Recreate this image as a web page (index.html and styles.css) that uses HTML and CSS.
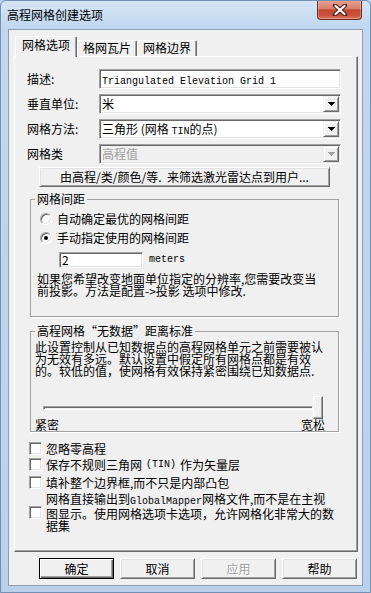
FILE: index.html
```html
<!DOCTYPE html>
<html lang="zh-CN">
<head>
    <meta charset="UTF-8">
    <title>高程网格创建选项</title>
    <link rel="stylesheet" href="styles.css">
</head>
<body>

    <div class="window">
        <div class="titlebar">
            <span class="title">高程网格创建选项</span>
            <div class="close-btn">
                <svg width="16" height="12" viewBox="0 0 16 12">
                    <path d="M3 1.5 L13 10.5 M13 1.5 L3 10.5" stroke="#4a2018" stroke-width="4.2" stroke-linecap="round"/>
                    <path d="M3.5 2 L12.5 10 M12.5 2 L3.5 10" stroke="#fff" stroke-width="2.2" stroke-linecap="round"/>
                </svg>
            </div>
        </div>

        <div class="client">
            <div class="tabs">
                <div class="tab active">网格选项</div>
                <div class="tab">格网瓦片</div>
                <div class="tab">网格边界</div>
            </div>

            <div class="panel">
                <div class="form-row">
                    <span class="label">描述:</span>
                    <div class="edit wide"><span class="mono">Triangulated Elevation Grid 1</span></div>
                </div>
                <div class="form-row">
                    <span class="label">垂直单位:</span>
                    <div class="combo">
                        <span class="combo-text">米</span>
                        <span class="drop"><svg width="7" height="4"><path d="M0 0h7v1H0zM1 1h5v1H1zM2 2h3v1H2zM3 3h1v1H3z"/></svg></span>
                    </div>
                </div>
                <div class="form-row">
                    <span class="label">网格方法:</span>
                    <div class="combo">
                        <span class="combo-text">三角形 (网格 <span class="mono">TIN</span>的点)</span>
                        <span class="drop"><svg width="7" height="4"><path d="M0 0h7v1H0zM1 1h5v1H1zM2 2h3v1H2zM3 3h1v1H3z"/></svg></span>
                    </div>
                </div>
                <div class="form-row">
                    <span class="label">网格类</span>
                    <div class="combo disabled">
                        <span class="combo-text">高程值</span>
                        <span class="drop"><svg width="7" height="4"><path d="M0 0h7v1H0zM1 1h5v1H1zM2 2h3v1H2zM3 3h1v1H3z"/></svg></span>
                    </div>
                </div>

                <div class="btn filter-btn">由高程/类/颜色/等.&nbsp; 来筛选激光雷达点到用户...</div>

                <fieldset class="group spacing">
                    <legend>网格间距</legend>
                    <div class="radio-row"><span class="radio"></span>自动确定最优的网格间距</div>
                    <div class="radio-row second"><span class="radio"><span class="dot"></span></span>手动指定使用的网格间距</div>
                    <div class="spacing-row">
                        <div class="edit small">2</div>
                        <span class="mono units">meters</span>
                    </div>
                    <p class="note">如果您希望改变地面单位指定的分辨率,您需要改变当<br>前投影。方法是配置-&gt;投影 选项中修改.</p>
                </fieldset>

                <fieldset class="group nodata">
                    <legend>高程网格“无数据”距离标准</legend>
                    <p class="note tight">此设置控制从已知数据点的高程网格单元之前需要被认<br>为无效有多远。默认设置中假定所有网格点都是有效<br>的。较低的值，使网格有效保持紧密围绕已知数据点.</p>
                    <div class="slider">
                        <div class="track"></div>
                        <div class="thumb"></div>
                    </div>
                    <div class="slider-labels">
                        <span>紧密</span>
                        <span>宽松</span>
                    </div>
                </fieldset>

                <div class="checks">
                    <div class="check-row"><span class="checkbox"></span>忽略零高程</div>
                    <div class="check-row r2"><span class="checkbox"></span>保存不规则三角网<span class="mono">(TIN)</span>作为矢量层</div>
                    <div class="check-row r3"><span class="checkbox"></span>填补整个边界框,而不只是内部凸包</div>
                    <div class="check-row r4"><span class="checkbox"></span><span class="check-text">网格直接输出到<span class="mono">GlobalMapper</span>网格文件,而不是在主视<br>图显示。使用网格选项卡选项，允许网格化非常大的数<br>据集</span></div>
                </div>
            </div>

            <div class="buttons">
                <div class="btn dlg default">确定</div>
                <div class="btn dlg">取消</div>
                <div class="btn dlg disabled">应用</div>
                <div class="btn dlg">帮助</div>
            </div>
        </div>
    </div>

</body>
</html>
```

FILE: styles.css
```css
* {
    box-sizing: border-box;
}

body {
    margin: 0;
    font-family: "Noto Sans CJK SC", "Noto Sans", sans-serif;
    font-size: 12px;
    line-height: 12px;
    color: #000;
    background: #b9d1ea;
}

.mono {
    font-family: "Liberation Mono", "DejaVu Sans Mono", monospace;
    font-size: 10px;
}

/* window frame */
.window {
    width: 371px;
    height: 593px;
    display: flex;
    flex-direction: column;
    border: 1px solid #7391b5;
    border-radius: 6px 6px 0 0;
    background: linear-gradient(180deg, #d4e4f5 0px, #c0d7ef 28px, #b9d1ea 100%);
    overflow: hidden;
}

.titlebar {
    height: 28px;
    display: flex;
    justify-content: space-between;
    align-items: flex-start;
    padding: 0 8px 0 6px;
}

.title {
    margin-top: 8px;
}

.close-btn {
    width: 45px;
    height: 20px;
    margin-top: -1px;
    display: flex;
    align-items: center;
    justify-content: center;
    border: 1px solid #6b2f26;
    border-top: none;
    border-radius: 0 0 4px 4px;
    background: linear-gradient(180deg, #e6a596 0%, #d9806d 45%, #c44a34 52%, #c9503b 80%, #db7a63 100%);
    box-shadow: inset 0 0 0 1px rgba(255, 255, 255, 0.25);
}

.client {
    flex: 1;
    margin: 0 7px 6px;
    background: #f0f0f0;
    border: 1px solid #8e9eb1;
    display: flex;
    flex-direction: column;
}

/* tabs */
.tabs {
    display: flex;
    align-items: flex-end;
    height: 20px;
    margin-top: 6px;
    padding-left: 6px;
}

.tab {
    height: 16px;
    padding: 1px 5px 0;
    border: 1px solid #fff;
    border-right-color: #696969;
    border-bottom: none;
    border-radius: 2px 2px 0 0;
    box-shadow: inset -1px 0 0 #a0a0a0;
    background: #f0f0f0;
}

.tab.active {
    width: 62px;
    height: 21px;
    margin-bottom: -1px;
    padding: 2px 0 0;
    text-align: center;
    position: relative;
    z-index: 1;
}

.panel {
    margin-left: 5px;
    width: 344px;
    height: 496px;
    border: 1px solid;
    border-color: #fff #696969 #696969 #fff;
    box-shadow: inset -1px -1px 0 #a0a0a0;
    padding-top: 12px;
}

/* form rows */
.form-row {
    display: flex;
    align-items: center;
    height: 20px;
    padding-left: 12px;
}

.form-row + .form-row {
    margin-top: 5px;
}

.label {
    width: 72px;
}

.edit,
.combo {
    height: 20px;
    background: #fff;
    border: 1px solid;
    border-color: #a0a0a0 #fff #fff #a0a0a0;
    box-shadow: inset 1px 1px 0 #696969, inset -1px -1px 0 #e3e3e3;
}

.edit {
    padding: 0 2px;
    line-height: 18px;
}

.edit.wide {
    width: 242px;
}

.combo {
    width: 242px;
    display: flex;
    padding: 1px;
}

.combo-text {
    flex: 1;
    line-height: 16px;
    padding-left: 1px;
    white-space: nowrap;
}

.drop {
    width: 16px;
    height: 16px;
    display: flex;
    align-items: center;
    justify-content: center;
    background: #f0f0f0;
    border: 1px solid;
    border-color: #f0f0f0 #696969 #696969 #f0f0f0;
    box-shadow: inset 1px 1px 0 #fff, inset -1px -1px 0 #a0a0a0;
}

.drop svg {
    fill: #000;
}

.combo.disabled {
    background: #f0f0f0;
    color: #a0a0a0;
}

.combo.disabled .drop svg {
    fill: #a0a0a0;
}

/* push buttons */
.btn {
    height: 20px;
    line-height: 18px;
    text-align: center;
    white-space: nowrap;
    background: #f0f0f0;
    border: 1px solid;
    border-color: #fff #696969 #696969 #fff;
    box-shadow: inset 1px 1px 0 #e3e3e3, inset -1px -1px 0 #a0a0a0;
}

.filter-btn {
    width: 291px;
    margin: 3px 0 0 24px;
}

/* group boxes */
.group {
    width: 309px;
    margin: 0 0 0 15px;
    padding: 0 6px;
    border: 1px solid #a0a0a0;
    box-shadow: 1px 1px 0 #fff;
}

.group legend {
    padding: 0 2px;
    margin-left: -2px;
    line-height: 12px;
}

.spacing {
    margin-top: 6px;
    padding-top: 7px;
    padding-bottom: 19px;
}

.radio-row {
    display: flex;
    align-items: center;
    gap: 5px;
    height: 14px;
    margin-left: 3px;
}

.radio-row.second {
    margin-top: 5px;
}

.radio {
    width: 12px;
    height: 12px;
    border-radius: 50%;
    display: flex;
    align-items: center;
    justify-content: center;
    background: #fff;
    border: 1px solid;
    border-color: #a0a0a0 #fff #fff #a0a0a0;
    box-shadow: inset 1px 1px 0 #696969, inset -1px -1px 0 #e3e3e3;
}

.dot {
    width: 4px;
    height: 4px;
    border-radius: 50%;
    background: #000;
}

.spacing-row {
    display: flex;
    align-items: center;
    margin-top: 7px;
    margin-left: 22px;
}

.edit.small {
    width: 84px;
    height: 16px;
    line-height: 14px;
}

.units {
    margin-left: 6px;
}

.note {
    margin: 5px 0 0;
    white-space: nowrap;
}

.nodata {
    margin-top: 8px;
    padding-top: 4px;
    padding-bottom: 0;
}

.note.tight {
    margin: 0 0 0 -2px;
}

.slider {
    display: flex;
    align-items: center;
    height: 23px;
    margin: 19px 0 0 6px;
}

.track {
    width: 270px;
    height: 4px;
    border: 1px solid;
    border-color: #a0a0a0 #fff #fff #a0a0a0;
    box-shadow: inset 1px 1px 0 #696969;
}

.thumb {
    width: 10px;
    height: 23px;
    background: #f0f0f0;
    border: 1px solid;
    border-color: #fff #696969 #696969 #fff;
    box-shadow: inset -1px -1px 0 #a0a0a0;
}

.slider-labels {
    display: flex;
    justify-content: space-between;
    width: 290px;
    margin-left: -2px;
}

/* check boxes */
.checks {
    margin: 10px 0 0 14px;
}

.check-row {
    display: flex;
    align-items: center;
    gap: 4px;
    height: 13px;
    white-space: nowrap;
}

.check-row.r2 {
    margin-top: 3px;
}

.check-row.r3 {
    margin-top: 5px;
}

.check-row.r4 {
    height: auto;
    margin-top: 4px;
}

.check-text {
    line-height: 12px;
}

.checkbox {
    width: 13px;
    height: 13px;
    flex-shrink: 0;
    background: #fff;
    border: 1px solid;
    border-color: #a0a0a0 #fff #fff #a0a0a0;
    box-shadow: inset 1px 1px 0 #696969, inset -1px -1px 0 #e3e3e3;
}

/* dialog buttons */
.buttons {
    display: flex;
    justify-content: flex-end;
    gap: 6px;
    margin-top: 6px;
    padding-right: 5px;
}

.btn.dlg {
    width: 75px;
    height: 21px;
    line-height: 19px;
}

.btn.default {
    border-color: #000;
    box-shadow: inset 1px 1px 0 #fff, inset -1px -1px 0 #696969, inset -2px -2px 0 #a0a0a0;
}

.btn.disabled {
    color: #a0a0a0;
    text-shadow: 1px 1px 0 #fff;
}
```
